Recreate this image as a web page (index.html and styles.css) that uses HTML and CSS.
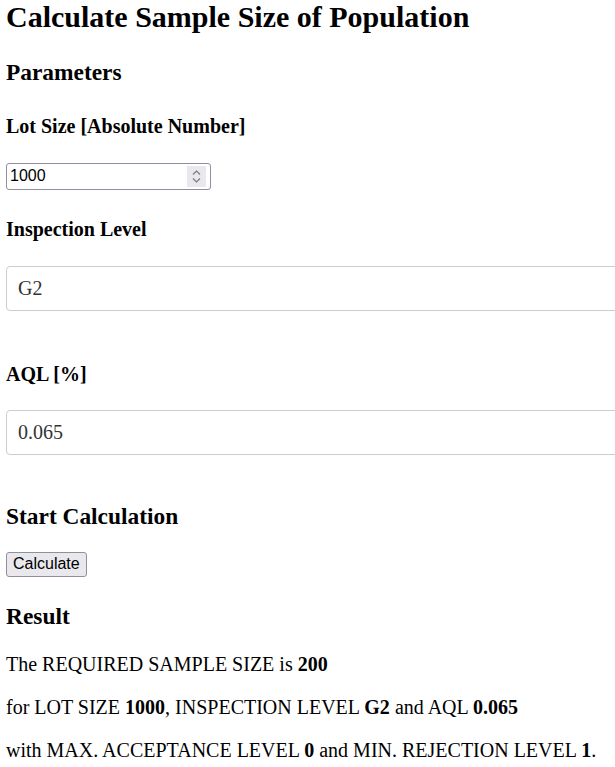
FILE: index.html
```html
<!DOCTYPE html>
<html lang="en">
<head>
<meta charset="utf-8">
<title>Calculate Sample Size of Population</title>
<link rel="stylesheet" href="styles.css">
</head>
<body>
<section class="page">
  <h1 class="title">Calculate Sample Size of Population</h1>
  <h3 class="section-head first">Parameters</h3>
  <h4 class="label label-lot">Lot Size [Absolute Number]</h4>
  <div class="num-field">
    <input class="num-input" type="text" value="1000">
    <span class="spin">
      <svg width="19" height="21" viewBox="0 0 19 21" aria-hidden="true">
        <path d="M6 8.5 L9.5 5 L13 8.5" fill="none" stroke="#7a7a80" stroke-width="1.2"/>
        <path d="M6 12.5 L9.5 16 L13 12.5" fill="none" stroke="#7a7a80" stroke-width="1.2"/>
      </svg>
    </span>
  </div>
  <h4 class="label label-insp">Inspection Level</h4>
  <input class="field field-insp" type="text" value="G2">
  <h4 class="label label-aql">AQL [%]</h4>
  <input class="field field-aql" type="text" value="0.065">
  <h3 class="section-head start">Start Calculation</h3>
  <button class="calc" type="button">Calculate</button>
  <h3 class="section-head result">Result</h3>
  <p class="res-line first-line">The REQUIRED SAMPLE SIZE is <b>200</b></p>
  <p class="res-line">for LOT SIZE <b>1000</b>, INSPECTION LEVEL <b>G2</b> and AQL <b>0.065</b></p>
  <p class="res-line">with MAX. ACCEPTANCE LEVEL <b>0</b> and MIN. REJECTION LEVEL <b>1</b>.</p>
</section>
</body>
</html>
```

FILE: styles.css
```css
html {
  overflow: hidden;
  background: #ffffff;
}

body {
  margin: 0;
  padding: 0 0 0 6px;
  font-family: "Liberation Serif", "Times New Roman", serif;
  font-size: 20px;
  color: #000000;
}

.page {
  display: block;
}

.title {
  font-size: 30px;
  font-weight: bold;
  margin: 0;
  line-height: normal;
}

.section-head {
  font-size: 23.4px;
  font-weight: bold;
  margin: 0;
}

.section-head.first { margin-top: 25px; }
.section-head.start { margin-top: 48px; }
.section-head.result { margin-top: 26.4px; }

.label {
  font-size: 20px;
  font-weight: bold;
  margin: 0;
}

.label-lot { margin-top: 28.6px; }
.label-insp { margin-top: 28px; }
.label-aql { margin-top: 52px; }

.num-field {
  display: flex;
  align-items: center;
  box-sizing: border-box;
  width: 205px;
  height: 27px;
  margin-top: 25px;
  border: 1px solid #8f8f9d;
  border-radius: 3px;
  padding: 0 4px 0 0;
  background: #ffffff;
}

.num-input {
  flex: 1;
  min-width: 0;
  border: none;
  outline: none;
  padding: 0 0 0 3px;
  margin: 0;
  font-family: "Liberation Sans", Arial, sans-serif;
  font-size: 16px;
  color: #000000;
  background: transparent;
}

.spin {
  display: flex;
  width: 19px;
  height: 21px;
  background: #e9e9ed;
}

.field {
  display: block;
  box-sizing: border-box;
  width: 660px;
  height: 45px;
  margin: 25.5px 0 0 0;
  padding: 0 11px;
  border: 1px solid #cccccc;
  border-radius: 4px;
  font-family: "Liberation Serif", "Times New Roman", serif;
  font-size: 20px;
  color: #333333;
  background: #ffffff;
}

.field-aql { margin-top: 24px; }

.calc {
  display: block;
  box-sizing: border-box;
  height: 25px;
  margin: 21.7px 0 0 0;
  padding: 0 6px;
  border: 1px solid #8f8f9d;
  border-radius: 3px;
  background: #e9e9ed;
  font-family: "Liberation Sans", Arial, sans-serif;
  font-size: 16px;
  color: #000000;
}

.res-line {
  margin: 20px 0 0 0;
  font-size: 20px;
}

.res-line.first-line { margin-top: 23.2px; }
```
